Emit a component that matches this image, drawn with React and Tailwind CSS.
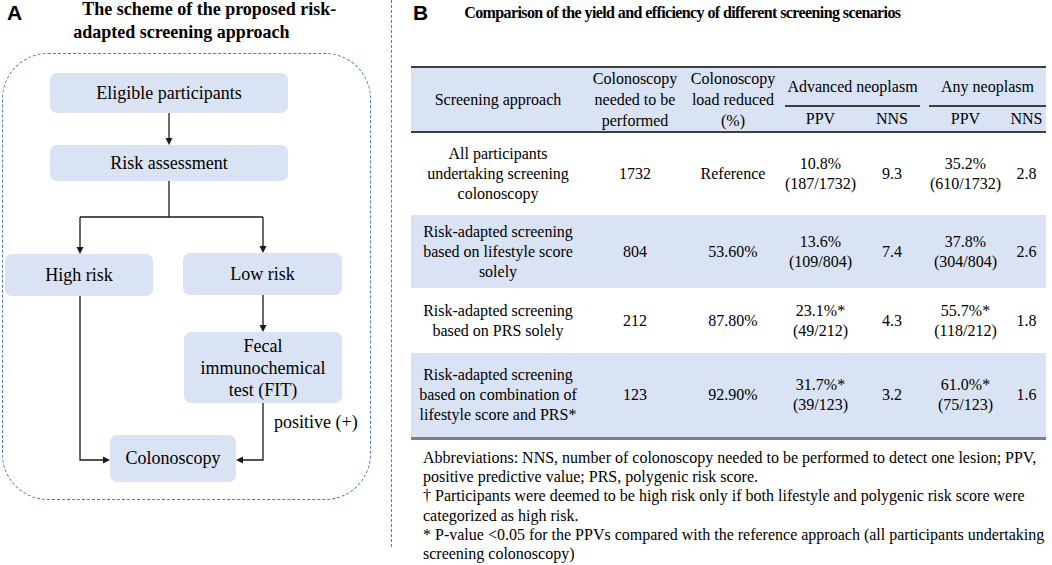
const rows = [
  {
    bg: 'bg-white',
    h: 'h-[82px]',
    approach: ['All participants', 'undertaking screening', 'colonoscopy'],
    n: '1732',
    load: 'Reference',
    advPpv: ['10.8%', '(187/1732)'],
    advNns: '9.3',
    anyPpv: ['35.2%', '(610/1732)'],
    anyNns: '2.8',
  },
  {
    bg: 'bg-[#dae3f3]',
    h: 'h-[73px]',
    approach: ['Risk-adapted screening', 'based on lifestyle score', 'solely'],
    n: '804',
    load: '53.60%',
    advPpv: ['13.6%', '(109/804)'],
    advNns: '7.4',
    anyPpv: ['37.8%', '(304/804)'],
    anyNns: '2.6',
  },
  {
    bg: 'bg-white',
    h: 'h-[65px]',
    approach: ['Risk-adapted screening', 'based on PRS solely'],
    n: '212',
    load: '87.80%',
    advPpv: ['23.1%*', '(49/212)'],
    advNns: '4.3',
    anyPpv: ['55.7%*', '(118/212)'],
    anyNns: '1.8',
  },
  {
    bg: 'bg-[#dae3f3]',
    h: 'h-[84px]',
    approach: ['Risk-adapted screening', 'based on combination of', 'lifestyle score and PRS*'],
    n: '123',
    load: '92.90%',
    advPpv: ['31.7%*', '(39/123)'],
    advNns: '3.2',
    anyPpv: ['61.0%*', '(75/123)'],
    anyNns: '1.6',
  },
];

const cols = 'grid grid-cols-[174px_100px_96px_79px_64px_83px_39px]';

function Cell({ lines }) {
  const list = Array.isArray(lines) ? lines : [lines];
  return (
    <div className="flex flex-col items-center justify-center text-center leading-[20px] whitespace-nowrap">
      {list.map((l) => (
        <span key={l}>{l}</span>
      ))}
    </div>
  );
}

function Node({ className, children }) {
  return (
    <div className={`absolute flex items-center justify-center text-center rounded-[7px] bg-[#dae3f3] text-[18px] ${className}`}>
      {children}
    </div>
  );
}

function Connectors() {
  const down = (x, y) => `${x - 3.5},${y - 7} ${x + 3.5},${y - 7} ${x},${y}`;
  return (
    <svg className="absolute inset-0 w-full h-full pointer-events-none" viewBox="0 0 367 445">
      <g stroke="#1a1a1a" strokeWidth="1.3" fill="none">
        <line x1="166" y1="59" x2="166" y2="85" />
        <polyline points="166,127 166,163" />
        <line x1="77" y1="163" x2="260" y2="163" />
        <line x1="77" y1="163" x2="77" y2="194" />
        <line x1="260" y1="163" x2="260" y2="193" />
        <line x1="260" y1="241" x2="260" y2="272" />
        <polyline points="77,242 77,406 101,406" />
        <polyline points="260,349 260,406 239,406" />
      </g>
      <g fill="#1a1a1a">
        <polygon points={down(166, 91)} />
        <polygon points={down(77, 200)} />
        <polygon points={down(260, 199)} />
        <polygon points={down(260, 278)} />
        <polygon points="100,402.5 100,409.5 107,406" />
        <polygon points="240,402.5 240,409.5 233,406" />
      </g>
    </svg>
  );
}

export default function App() {
  return (
    <div className="w-[1052px] h-[565px] overflow-hidden bg-white flex font-['Liberation_Serif',serif] text-black">
      {/* Panel A */}
      <div className="w-[391px] shrink-0 flex flex-col">
        <div className="flex h-[53px]">
          <span className="font-['Liberation_Sans',sans-serif] font-bold text-[21px] leading-none pl-[7px] pt-[2px]">A</span>
          <div className="ml-[51px] -mt-[2px] font-bold text-[18px] leading-[23px] whitespace-nowrap">
            <div className="pl-[9px]">The scheme of the proposed risk-</div>
            <div>adapted screening approach</div>
          </div>
        </div>
        <div className="relative ml-[2px] w-[369px] h-[447px] border border-dashed border-[#4a7bc8] rounded-[46px]">
          <Connectors />
          <Node className="left-[47px] top-[19px] w-[238px] h-[40px]">Eligible participants</Node>
          <Node className="left-[47px] top-[91px] w-[238px] h-[36px]">Risk assessment</Node>
          <Node className="left-[2px] top-[200px] w-[148px] h-[42px]">High risk</Node>
          <Node className="left-[180px] top-[199px] w-[159px] h-[42px]">Low risk</Node>
          <Node className="left-[181px] top-[278px] w-[158px] h-[71px] leading-[22px]">
            Fecal
            <br />
            immunochemical
            <br />
            test (FIT)
          </Node>
          <Node className="left-[107px] top-[381px] w-[126px] h-[47px]">Colonoscopy</Node>
          <span className="absolute left-[271px] top-[357px] text-[18px] leading-[22px] whitespace-nowrap">positive (+)</span>
        </div>
      </div>

      {/* Divider */}
      <div className="w-0 h-[547px] border-l border-dashed border-[#4a7bc8]" />

      {/* Panel B */}
      <div className="flex-1 pl-[19px]">
        <div className="flex h-[66px]">
          <span className="font-['Liberation_Sans',sans-serif] font-bold text-[21px] leading-none ml-[2px] pt-[2px]">B</span>
          <div className="ml-[36px] pt-[3px] font-bold text-[16px] leading-[20px] tracking-[-0.6px] whitespace-nowrap">
            Comparison of the yield and efficiency of different screening scenarios
          </div>
        </div>

        <div className="w-[635px] text-[16px]">
          {/* Header */}
          <div className={`${cols} grid-rows-[39px_24px] bg-[#dae3f3] border-y-2 border-[#3f3f3f]`}>
            <div className="row-span-2 flex items-center justify-center">Screening approach</div>
            <div className="row-span-2 flex flex-col items-center justify-center leading-[21px]">
              <span>Colonoscopy</span>
              <span>needed to be</span>
              <span>performed</span>
            </div>
            <div className="row-span-2 flex flex-col items-center justify-center leading-[21px]">
              <span>Colonoscopy</span>
              <span>load reduced</span>
              <span>(%)</span>
            </div>
            <div className="col-span-2 px-[4px]">
              <div className="h-full flex items-center justify-center border-b-2 border-[#3f3f3f] whitespace-nowrap">
                Advanced neoplasm
              </div>
            </div>
            <div className="col-span-2 pl-[5px]">
              <div className="h-full flex items-center justify-center border-b-2 border-[#3f3f3f] whitespace-nowrap">
                Any neoplasm
              </div>
            </div>
            <div className="flex items-center justify-center">PPV</div>
            <div className="flex items-center justify-center">NNS</div>
            <div className="flex items-center justify-center">PPV</div>
            <div className="flex items-center justify-center">NNS</div>
          </div>

          {/* Body */}
          <div className="border-b-[3px] border-[#7f7f7f]">
            {rows.map((r, i) => (
              <div key={i} className={`${cols} ${r.bg} ${r.h}`}>
                <Cell lines={r.approach} />
                <Cell lines={r.n} />
                <Cell lines={r.load} />
                <Cell lines={r.advPpv} />
                <Cell lines={r.advNns} />
                <Cell lines={r.anyPpv} />
                <Cell lines={r.anyNns} />
              </div>
            ))}
          </div>
        </div>

        {/* Footnotes */}
        <div className="mt-[8px] pl-[12px] text-[16px] leading-[19.2px] whitespace-nowrap">
          <div>Abbreviations: NNS, number of colonoscopy needed to be performed to detect one lesion; PPV,</div>
          <div>positive predictive value; PRS, polygenic risk score.</div>
          <div>† Participants were deemed to be high risk only if both lifestyle and polygenic risk score were</div>
          <div>categorized as high risk.</div>
          <div>* P-value &lt;0.05 for the PPVs compared with the reference approach (all participants undertaking</div>
          <div>screening colonoscopy)</div>
        </div>
      </div>
    </div>
  );
}
